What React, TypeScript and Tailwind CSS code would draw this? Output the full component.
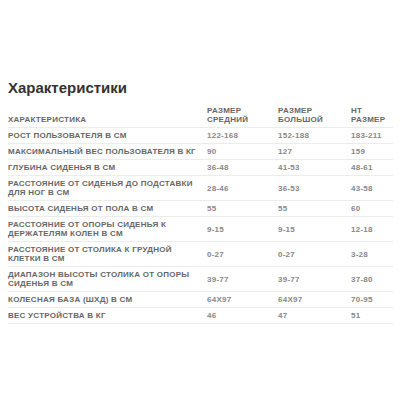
const rows: [string, string, string, string][] = [
  ['Рост пользователя в см', '122-168', '152-188', '183-211'],
  ['Максимальный вес пользователя в кг', '90', '127', '159'],
  ['Глубина сиденья в см', '36-48', '41-53', '48-61'],
  ['Расстояние от сиденья до подставки для ног в см', '28-46', '36-53', '43-58'],
  ['Высота сиденья от пола в см', '55', '55', '60'],
  ['Расстояние от опоры сиденья к держателям колен в см', '9-15', '9-15', '12-18'],
  ['Расстояние от столика к грудной клетки в см', '0-27', '0-27', '3-28'],
  ['Диапазон высоты столика от опоры сиденья в см', '39-77', '39-77', '37-80'],
  ['Колесная база (ШхД) в см', '64х97', '64х97', '70-95'],
  ['Вес устройства в кг', '46', '47', '51'],
];

export default function App() {
  return (
    <div
      className="w-[400px] h-[400px] bg-white pt-[79px] px-2"
      style={{ fontFamily: '"Liberation Sans", Arial, sans-serif' }}
    >
      <h2 className="text-[15px] leading-[18px] font-bold text-[#333] mb-[6px]">
        Характеристики
      </h2>
      <table className="w-[385px] border-collapse table-fixed text-[8px] leading-[9px] tracking-[0.25px] font-bold uppercase">
        <colgroup>
          <col className="w-[199px]" />
          <col className="w-[71px]" />
          <col className="w-[73px]" />
          <col className="w-[42px]" />
        </colgroup>
        <thead>
          <tr className="border-b border-[#ececec] text-[#666] align-bottom">
            <th className="text-left font-bold pr-2 py-[3px]">Характеристика</th>
            <th className="text-left font-bold pr-2 py-[3px]">Размер средний</th>
            <th className="text-left font-bold pr-2 py-[3px]">Размер большой</th>
            <th className="text-left font-bold py-[3px]">НТ размер</th>
          </tr>
        </thead>
        <tbody>
          {rows.map((r) => (
            <tr key={r[0]} className="border-b border-[#ececec] align-middle">
              <td className="text-[#666] pr-2 py-[3px]">{r[0]}</td>
              <td className="text-[#888] pr-2 py-[3px]">{r[1]}</td>
              <td className="text-[#888] pr-2 py-[3px]">{r[2]}</td>
              <td className="text-[#888] py-[3px]">{r[3]}</td>
            </tr>
          ))}
        </tbody>
      </table>
    </div>
  );
}
